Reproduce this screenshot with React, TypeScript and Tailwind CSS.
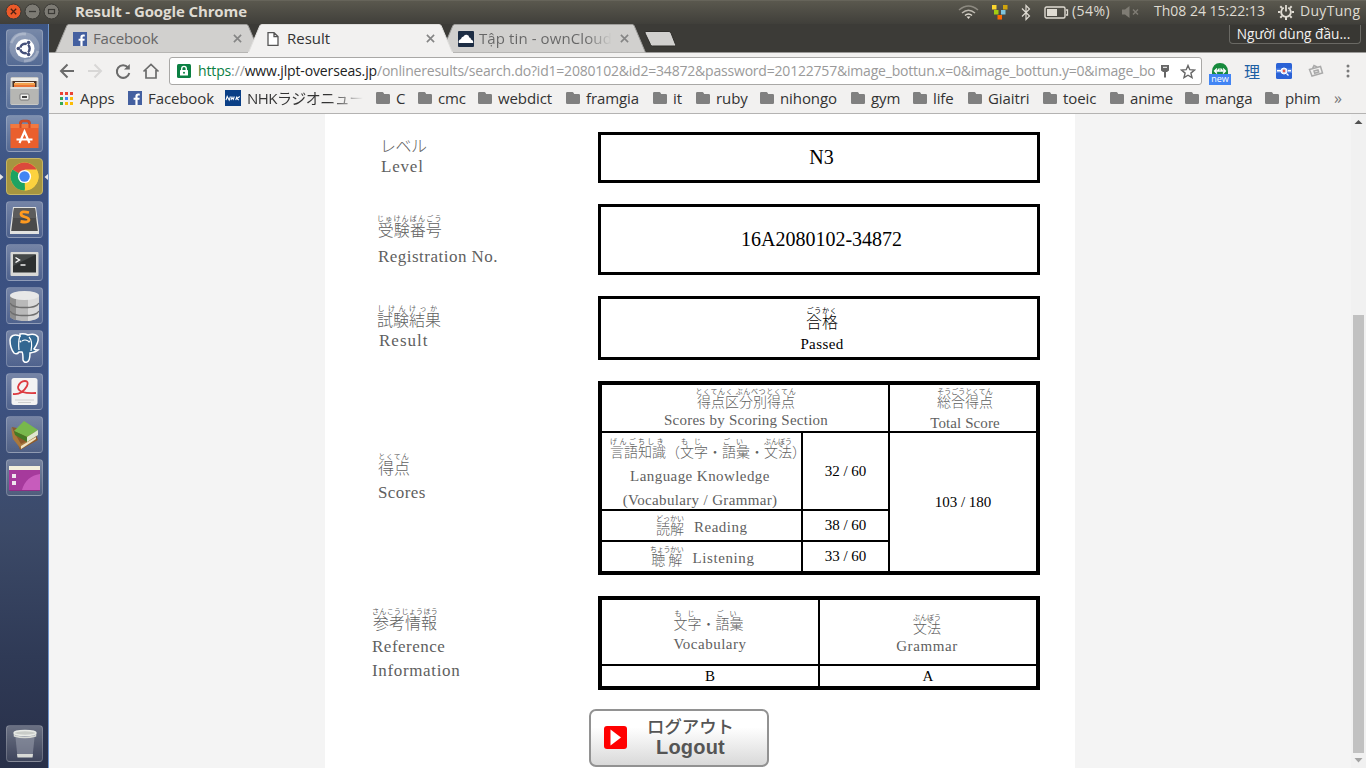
import React from "react";

/* ---------- shared ---------- */

const UI = "[font-family:'Open_Sans','Noto_Sans_CJK_JP',sans-serif]";
const SERIF = "[font-family:'Liberation_Serif','Noto_Sans_CJK_JP',serif]";
const JP = "[font-family:'Noto_Sans_CJK_JP',sans-serif]";

function FacebookIcon() {
  return (
    <svg width="14" height="14" viewBox="0 0 14 14" className="shrink-0">
      <rect width="14" height="14" fill="#4460a0" />
      <path d="M9.6 14V8.8h1.8l.3-2H9.6V5.6c0-.7.2-1 1.1-1h1.1V2.7c-.3 0-.9-.1-1.6-.1-1.8 0-2.8 1-2.8 2.8v1.4H5.6v2h1.8V14z" fill="#fff" />
    </svg>
  );
}

function FolderIcon() {
  return (
    <svg width="14" height="12" viewBox="0 0 14 12" className="shrink-0">
      <path d="M0 1.2Q0 0 1.2 0h5.3q.6 0 1 .7l.7 1.300h4.600Q14 2 14 3.200v7.600q0 1.200-1.200 1.200H1.200Q0 12 0 10.800z" fill="#808080" />
    </svg>
  );
}

/* ---------- top panel ---------- */

function TopPanel() {
  return (
    <header className="flex h-6 shrink-0 items-start border-t border-[#66645a] bg-gradient-to-b from-[#5a584e] to-[#403f3a] text-[#dfdbd2]">
      <svg width="62" height="22" viewBox="0 0 62 22" className="shrink-0">
        <circle cx="13.500" cy="10.500" r="7.500" fill="#ec5a29" stroke="#3a3935" />
        <path d="M10.800 7.800l5.400 5.400M16.200 7.800l-5.400 5.400" stroke="#4a2013" strokeWidth="1.300" />
        <circle cx="32.500" cy="10.500" r="7.500" fill="#7d7b74" stroke="#3a3935" />
        <path d="M29 10.500h7" stroke="#3a3935" strokeWidth="1.300" />
        <circle cx="51.500" cy="10.500" r="7.500" fill="#7d7b74" stroke="#3a3935" />
        <rect x="48.500" y="8.500" width="6" height="4" fill="none" stroke="#3a3935" strokeWidth="1.200" />
      </svg>
      <h1 className="ml-[13px] text-[15px] font-bold leading-[21px] tracking-[-0.1px]">Result - Google Chrome</h1>
      <div className="ml-auto flex h-[22px] w-[408px] items-center text-[14px] leading-[20px]">
        <svg width="21" height="16" viewBox="0 0 21 16" fill="none" strokeWidth="1.500" className="shrink-0">
          <path d="M1 6Q10.500-2 20 6" stroke="#8d8a81" />
          <path d="M4 9Q10.500 3.500 17 9" stroke="#bdb9b0" />
          <path d="M7 11.500Q10.500 8.500 14 11.500" stroke="#dfdbd2" />
          <path d="M8.500 12.500h4l-2 2.500z" fill="#dfdbd2" />
        </svg>
        <svg width="17" height="16" viewBox="0 0 17 16" className="ml-3 shrink-0">
          <rect x="1" y="1" width="4.500" height="4.500" fill="#fcd62e" />
          <rect x="12" y="1" width="4.500" height="4.500" fill="#d0a40c" />
          <rect x="3" y="6" width="4.500" height="4.500" fill="#a3cc12" />
          <rect x="10" y="6" width="4.500" height="4.500" fill="#7fc4dd" />
          <rect x="6.500" y="11" width="4.500" height="4.500" fill="#ff6a00" />
        </svg>
        <svg width="10" height="17" viewBox="0 0 10 17" fill="none" stroke="#dfdbd2" strokeWidth="1.200" className="ml-[13px] shrink-0">
          <path d="M1 4.500l7.500 7.500L5 15.500V1.500L8.500 5 1 12.500" />
        </svg>
        <svg width="25" height="13" viewBox="0 0 25 13" className="ml-[13px] shrink-0">
          <rect x="1" y="1" width="20" height="11" rx="1.500" fill="none" stroke="#dfdbd2" strokeWidth="1.400" />
          <rect x="3" y="3" width="10" height="7" fill="#dfdbd2" />
          <path d="M22 4h1.500v5H22" fill="none" stroke="#dfdbd2" strokeWidth="1.300" />
        </svg>
        <span className="mb-[2px] ml-[3px] w-[38px] tracking-[0.45px]">(54%)</span>
        <svg width="18" height="14" viewBox="0 0 18 14" className="ml-[12px] shrink-0">
          <path d="M0 4.500h3L7.500 1v12L3 9.500H0z" fill="#7f7c74" />
          <path d="M11 4.500l5 5M16 4.500l-5 5" stroke="#7f7c74" strokeWidth="1.500" />
        </svg>
        <span className="mb-[2px] ml-[14px] w-[111px] whitespace-nowrap">Th08 24 15:22:13</span>
        <svg width="16" height="16" viewBox="0 0 16 16" fill="none" stroke="#dfdbd2" className="ml-[13px] shrink-0">
          <path d="M5.800 3.800a4.800 4.800 0 1 0 4.400 0" strokeWidth="1.800" />
          <path d="M8 1v6.500" strokeWidth="1.800" />
          <path d="M0 8h2.500M13.500 8H16M2.300 13.700l1.800-1.800M13.700 13.700l-1.800-1.800M2.300 2.300l1.800 1.800M13.700 2.300l-1.800 1.800M8 13v3" strokeWidth="2" />
        </svg>
        <span className="mb-[2px] ml-[6px] tracking-[0.300px]">DuyTung</span>
      </div>
    </header>
  );
}

/* ---------- launcher ---------- */

function LauncherIcon({ active = false, children }: { active?: boolean; children: React.ReactNode }) {
  return (
    <div
      className={
        active
          ? "mb-[6px] flex h-[37px] w-[37px] shrink-0 items-center justify-center rounded-[4px] border border-[#c5b565] bg-[#a69540]"
          : "mb-[6px] flex h-[37px] w-[37px] shrink-0 items-center justify-center rounded-[4px] border border-white/20 bg-gradient-to-b from-white/30 to-white/10"
      }
    >
      <svg width="33" height="33" viewBox="0 0 33 33">
        {children}
      </svg>
    </div>
  );
}

function Launcher() {
  return (
    <aside className="relative flex w-[49px] shrink-0 flex-col border-r border-[#6f94cb] bg-[linear-gradient(180deg,#3d5583_0%,#48618f_12%,#3a5080_22%,#3d5282_50%,#3c4a68_68%,#2f3a56_85%,#293049_100%)] pt-[5px] pl-[6px]">
      <LauncherIcon>
        <circle cx="16.500" cy="16.500" r="15" fill="#fff" opacity=".22" />
        <path d="M3 12Q7 1 18 3M30 20Q27 31 16 30" stroke="#fff" strokeWidth="3" opacity=".25" fill="none" />
        <circle cx="17" cy="17.500" r="9.500" fill="#fff" />
        <circle cx="17" cy="17.500" r="4.600" fill="none" stroke="#45507a" strokeWidth="2.600" />
        <path d="M17 17.500L8 17.500M17 17.500l5-8.600M17 17.500l5 8.600" stroke="#fff" strokeWidth="1.300" />
        <circle cx="17" cy="17.500" r="3.200" fill="#fff" />
        <circle cx="10.300" cy="17.500" r="1.800" fill="#45507a" />
        <circle cx="20.600" cy="11.500" r="1.800" fill="#45507a" />
        <circle cx="20.600" cy="23.500" r="1.800" fill="#45507a" />
      </LauncherIcon>
      <LauncherIcon>
        <rect x="2.500" y="3" width="28" height="28" rx="1.500" fill="#c8c8c5" />
        <path d="M3 4h27v3H3z" fill="#e9e9e6" />
        <rect x="4.500" y="7" width="24" height="6" fill="#4a3327" />
        <path d="M6 9h21v2H6z" fill="#f2a14c" />
        <path d="M6 11h21v2H6z" fill="#ea7438" />
        <path d="M7 8h19v1H7z" fill="#f5e4cf" />
        <path d="M2.500 13h28v17h-28z" fill="#b6b6b3" />
        <path d="M2.500 13h28v2h-28z" fill="#dededb" />
        <rect x="12" y="20" width="9" height="6" rx="1" fill="#f2f2f0" stroke="#777" />
        <path d="M14 22h5v2h-5z" fill="#444" />
      </LauncherIcon>
      <LauncherIcon>
        <path d="M12.500 11V6.500Q12.500 4 15 4h4q2.500 0 2.500 2.500V11" fill="none" stroke="#b33d1c" strokeWidth="2.500" />
        <path d="M2.500 7h28v24h-28z" fill="#ea5f2d" />
        <path d="M2.500 7h28v4h-28z" fill="#f3793f" />
        <path d="M12.500 11V6.500Q12.500 4 15 4h4q2.500 0 2.500 2.500V11" fill="none" stroke="#cf4b25" strokeWidth="2" />
        <path d="M11.500 26l5-11.500L21.500 26M8.500 22.500h16" fill="none" stroke="#fff" strokeWidth="2.200" />
      </LauncherIcon>
      <LauncherIcon active>
        <circle cx="16.500" cy="16.500" r="14" fill="#fcd23f" />
        <path d="M16.500 16.500L4.400 9.500a14 14 0 0 1 24.200 0z" fill="#db4a3c" />
        <path d="M4.400 9.500l12.100 7 .5 13.900A14 14 0 0 1 4.400 9.500z" fill="#1da362" />
        <path d="M22 19.500L16.300 30.500a14 14 0 0 0 12.300-21H16.500z" fill="#fcd23f" />
        <circle cx="16.500" cy="16.500" r="6.600" fill="#fff" />
        <circle cx="16.500" cy="16.500" r="5.200" fill="#4285f4" />
      </LauncherIcon>
      <LauncherIcon>
        <path d="M5 4h23l3 23v4H2v-4z" fill="#e2e2e0" />
        <path d="M6 5h21l2.800 23H3.200z" fill="#4a4a4a" />
        <path d="M6 5h21l1.200 10H4.800z" fill="#5c5c5c" />
        <path d="M21 9.500q-8-2-8 1.500 0 2 4 3t4 3q-.5 3-8.500 1.500" fill="none" stroke="#ff9a1f" strokeWidth="2.800" />
      </LauncherIcon>
      <LauncherIcon>
        <rect x="2.500" y="6" width="28" height="24" rx="1" fill="#d9d9d6" />
        <rect x="5" y="8.500" width="23" height="18" fill="#2d3030" />
        <path d="M5 8.500h23L5 20z" fill="#454949" />
        <path d="M7.500 11.500l4 2.500-4 2.500" fill="none" stroke="#fff" strokeWidth="1.400" />
        <path d="M12.500 19h5" stroke="#fff" strokeWidth="1.400" />
      </LauncherIcon>
      <LauncherIcon>
        <path d="M2 7v20c0 2.500 6 5 14.500 5S31 29.500 31 27V7z" fill="#b9b9b9" />
        <path d="M2 7v20c0 2 3 3.500 6 4.300V8z" fill="#8d8d8d" />
        <path d="M20 10v22c6-.5 11-2.500 11-5V7z" fill="#dadada" />
        <ellipse cx="16.500" cy="6.500" rx="14.500" ry="4.500" fill="#e8e8e8" />
        <path d="M2 14c2 4 7 4.500 14.500 4.500S29 18 31 14M2 22c2 4 7 4.500 14.500 4.500S29 26 31 22" fill="none" stroke="#6f6f6f" strokeWidth="1.300" />
      </LauncherIcon>
      <LauncherIcon>
        <path d="M12 4Q3 1 2 8q0 8 4 13 3 2 5-1l3 0q1 1 1 8 1 3 4 2 3-1 3-9 6-1 8-3-3 0-4-1 5-7 4-12-3-4-10-2-4-2-8-1z" fill="#336791" stroke="#fff" strokeWidth="1.500" />
        <path d="M12 4q-2 5-1 14M21 5q4 4 2 14M14 9q3-2 6 0" fill="none" stroke="#fff" strokeWidth="1.200" />
        <circle cx="12.500" cy="9.500" r="1" fill="#fff" />
        <circle cx="21" cy="9.500" r="1" fill="#fff" />
      </LauncherIcon>
      <LauncherIcon>
        <rect x="3.500" y="3" width="26" height="27" rx="2.500" fill="#f3f3f3" />
        <path d="M5 19Q14 20 19 11q2-5-2-5-5 0-7 6 0 7 18 6" fill="none" stroke="#dd3b40" strokeWidth="1.800" />
        <path d="M7 25h19M10 27.500h13" stroke="#cfcfcf" strokeWidth="1" />
      </LauncherIcon>
      <LauncherIcon>
        <path d="M4 9l4 12 4 11 18-10-3-8z" fill="#8d5a2b" />
        <path d="M3 9l2 12 8 10 14-9v-3l-14 7z" fill="#a9783c" />
        <path d="M13 28l15-9v2l-15 10z" fill="#efe3c2" />
        <path d="M6 13L16 3l14 9-11 7z" fill="#78b84c" />
        <path d="M6 13l13 6v5L7 17z" fill="#447a24" />
        <path d="M19 19l11-7v5l-11 7z" fill="#dfe8cf" />
      </LauncherIcon>
      <LauncherIcon>
        <rect x="1" y="5" width="31" height="25" rx="1" fill="#8f2d83" />
        <path d="M1 9h31v20H1z" fill="#a63a9c" />
        <path d="M14 29q4-14 18-16v16z" fill="#d56bcb" opacity=".7" />
        <path d="M1 5h31v4H1z" fill="#f3f0dc" />
        <path d="M4 13h4v4H4zM4 20h4v4H4z" fill="#efe6ee" />
      </LauncherIcon>
      <div className="mt-auto">
        <LauncherIcon>
          <path d="M7 6h20l-2.500 24H9.500z" fill="#aab0bc" opacity=".45" />
          <path d="M9 27h16l-.5 3.500h-15z" fill="#d8dad6" />
          <ellipse cx="17" cy="6" rx="11" ry="2.500" fill="#c9ccc8" stroke="#e9ebe7" strokeWidth="1.500" />
          <path d="M6.500 7v2q10 3 21 0V7" fill="none" stroke="#d8dad6" strokeWidth="1.500" />
        </LauncherIcon>
      </div>
      <svg width="48" height="8" viewBox="0 0 48 8" className="absolute left-0 top-[149px]">
        <path d="M0 1l3.500 3L0 7zM48 1l-3.500 3L48 7z" fill="#e6e6e6" />
      </svg>
    </aside>
  );
}

/* ---------- tabs ---------- */

function Tab({ active = false, last = false, icon, title }: { active?: boolean; last?: boolean; icon: React.ReactNode; title: string }) {
  return (
    <div className={active ? "relative z-10 -ml-3 flex h-[29px] w-[205px] shrink-0 items-center" : "relative flex h-[29px] w-[205px] shrink-0 items-center first:ml-0 -ml-3"}>
      <svg width="205" height="29" viewBox="0 0 205 29" className="absolute inset-0">
        <path
          d="M0 28.500L1 27.500 11.700 2Q12.400.5 13.500.5H191.500Q192.600.5 193.300 2L204 27.500l1 1"
          fill={active ? "#f2f1f0" : "#d1d0ce"}
          stroke={active ? "#e0dfdd" : "#9f9e9c"}
        />
        {active && <path d="M0 28.500h205" stroke="#f2f1f0" />}
      </svg>
      <div className="relative ml-[17px] flex w-4 shrink-0 justify-center">{icon}</div>
      <span
        className={
          active
            ? "relative ml-[6px] mb-px w-[134px] text-[15px] leading-5 text-[#333]"
            : last
              ? "relative ml-[5px] mb-px w-[133px] overflow-hidden whitespace-nowrap bg-gradient-to-r from-[#666] from-80% to-[#d1d0ce] to-100% bg-clip-text text-[15px] leading-[22px] tracking-[0.100px] text-transparent"
              : "relative ml-[5px] mb-px w-[135px] text-[15px] leading-5 tracking-[-0.2px] text-[#666]"
        }
      >
        {title}
      </span>
      <svg width="9" height="9" viewBox="0 0 10 10" className={last ? "relative ml-[8px]" : "relative ml-[5px]"}>
        <path d="M1 1l8 8M9 1L1 9" stroke="#858585" strokeWidth="1.800" />
      </svg>
    </div>
  );
}

function TabStrip() {
  return (
    <div className="flex h-[29px] shrink-0 items-start border-b border-[#9b9a98] bg-[#3c3b37] pl-[6px] pr-[5px]">
      <Tab icon={<FacebookIcon />} title="Facebook" />
      <Tab
        active
        icon={
          <svg width="12" height="14" viewBox="0 0 12 14">
            <path d="M1 .7h6L11 4.500v8.800H1zM7 .7v4h4" fill="#fff" stroke="#555" strokeWidth="1.300" />
          </svg>
        }
        title="Result"
      />
      <Tab
        last
        icon={
          <svg width="16" height="16" viewBox="0 0 16 16">
            <rect width="16" height="16" rx="1" fill="#1d2d44" />
            <path d="M.8 12Q0 9 3 8 3.500 5.500 5.500 5.500 6.500 3.500 8.500 3.800 11 4 11.300 6.500 13 6.500 13 8.500 15.500 9 15.200 12z" fill="#fff" />
          </svg>
        }
        title="Tập tin - ownCloud"
      />
      <svg width="33" height="16" viewBox="0 0 33 16" className="mt-[7px] -ml-[2px] shrink-0">
        <path d="M2 .5h23q1.500 0 2 1.500l4.500 11.500q.5 1.500-1 1.500H8.500q-1.500 0-2-1.500L1 2Q.5.500 2 .5z" fill="#d1d0ce" stroke="#2f2e2b" />
      </svg>
      <div className="ml-auto mt-px flex h-[19px] w-[132px] items-center justify-center whitespace-nowrap rounded-b-[4px] border border-t-0 border-[#6a6964] bg-[#383733] pr-[3px] text-[13.700px] leading-[18px] text-[#f2f1f0]">
        Người dùng đầu...
      </div>
    </div>
  );
}

/* ---------- toolbar ---------- */

function Toolbar() {
  return (
    <div className="flex h-[36px] shrink-0 items-center bg-[#f2f1f0]">
      <svg width="109" height="18" viewBox="0 0 109 18" fill="none" stroke="#6b6b6b" strokeWidth="2" className="ml-[10px] shrink-0">
        <path d="M15 9H3M8.500 2.500L2 9l6.500 6.500" />
        <path d="M29 9h12M35.500 2.500L42 9l-6.500 6.500" stroke="#d8d7d6" />
        <path d="M69 5.500A6.300 6.300 0 1 0 70.300 11" />
        <path d="M70.800 2v5.500H65z" fill="#6b6b6b" stroke="none" />
        <path d="M84.500 9.500L92 2.500l7.500 7M87 8v8h10V8" strokeWidth="1.700" />
      </svg>
      <div className="ml-px flex h-[28px] w-[1033px] shrink-0 items-center rounded-[3px] border border-[#a9a8a6] bg-white">
        <svg width="14" height="14" viewBox="0 0 14 14" className="ml-[7px] shrink-0">
          <rect width="14" height="14" rx="1.500" fill="#0b8043" />
          <rect x="3" y="6" width="8" height="5.500" rx=".5" fill="#fff" />
          <path d="M4.700 6V4.700a2.300 2.300 0 0 1 4.600 0V6" fill="none" stroke="#fff" strokeWidth="1.400" />
          <circle cx="7" cy="8.700" r="1" fill="#0b8043" />
        </svg>
        <div className="ml-[7px] flex w-[957px] overflow-hidden whitespace-nowrap text-[14px] leading-[22px] text-[#9a9a9a]">
          <span className="tracking-[-0.140px]">
            <span className="text-[#0b8043]">https</span>://<span className="text-[#222]">www.jlpt-overseas.jp</span>
          </span>
          <span className="tracking-[-0.200px]">
            /onlineresults/search.do?id1=2080102&amp;id2=34872&amp;password=20122757&amp;image_bottun.x=0&amp;image_bottun.y=0&amp;image_bo
          </span>
        </div>
        <svg width="10" height="13" viewBox="0 0 10 13" className="ml-[5px] shrink-0">
          <path d="M1 0h8v5.500L7 7H3L1 5.500z" fill="#666" />
          <path d="M3 1.800h4v1H3z" fill="#fff" />
          <path d="M4 7h2v5.500H4z" fill="#666" />
        </svg>
        <svg width="16" height="15" viewBox="0 0 16 15" className="ml-[10px] shrink-0">
          <path d="M8 1.500l1.800 4.200 4.700.4-3.600 3 1.100 4.500L8 11.200l-4 2.400 1.100-4.500-3.600-3 4.700-.4z" fill="none" stroke="#666" strokeWidth="1.400" />
        </svg>
      </div>
      <div className="mt-[5px] ml-[6px] flex h-[22px] w-[24px] shrink-0 flex-col items-center">
        <svg width="18" height="11" viewBox="0 0 18 11" className="shrink-0">
          <path d="M1 11V8.500Q1.500 0 9 0t8 8.500V11z" fill="#168a3c" />
          <path d="M3.500 8h11M6 5.500L3.500 8 6 10.500M8.500 5.500L6.500 8M9.500 5.500l2 2.500M12 5.500L14.500 8 12 10.500" stroke="#fff" strokeWidth="1.300" fill="none" />
        </svg>
        <div className="h-[11px] w-[22px] bg-[#4285f4] text-center text-[9px] leading-[10px] text-white">new</div>
      </div>
      <span className={`${JP} ml-[12px] w-4 text-[16px] leading-5 text-[#1d5fa3]`}>理</span>
      <svg width="16" height="16" viewBox="0 0 16 16" className="ml-[16px] shrink-0">
        <rect width="16" height="16" rx="1.500" fill="#2b62d6" />
        <path d="M0 5.500h16v4.500H0z" fill="#4f81e6" />
        <path d="M1 7h4v1.500H1zM12 7h3v1.500h-3z" fill="#fff" />
        <circle cx="8" cy="8" r="3" fill="#dce7fb" stroke="#fff" />
        <circle cx="8" cy="8" r="1.400" fill="#e2574c" />
        <path d="M10.500 10.500l2 2" stroke="#fff" strokeWidth="1.300" />
      </svg>
      <svg width="16" height="16" viewBox="0 0 16 16" fill="none" stroke="#aaa" strokeWidth="1.500" className="ml-[16px] shrink-0">
        <path d="M1.500 6.500l11-3 2 6.500-10.500 3zM4.500 5.500l1.500-3 3 1.500M6 8l4-1 .7 2-4 1.200z" />
      </svg>
      <svg width="4" height="14" viewBox="0 0 4 14" className="ml-[22px] shrink-0">
        <circle cx="2" cy="2" r="1.500" fill="#7a7a7a" />
        <circle cx="2" cy="7" r="1.500" fill="#7a7a7a" />
        <circle cx="2" cy="12" r="1.500" fill="#7a7a7a" />
      </svg>
    </div>
  );
}

/* ---------- bookmarks ---------- */

const folders: { name: string; width: string }[] = [
  { name: "C", width: "w-[42px]" },
  { name: "cmc", width: "w-[60px]" },
  { name: "webdict", width: "w-[88px]" },
  { name: "framgia", width: "w-[87px]" },
  { name: "it", width: "w-[43px]" },
  { name: "ruby", width: "w-[64px]" },
  { name: "nihongo", width: "w-[91px]" },
  { name: "gym", width: "w-[62px]" },
  { name: "life", width: "w-[55px]" },
  { name: "Giaitri", width: "w-[75px]" },
  { name: "toeic", width: "w-[67px]" },
  { name: "anime", width: "w-[75px]" },
  { name: "manga", width: "w-[80px]" },
  { name: "phim", width: "w-[69px]" },
];

function BookmarksBar() {
  return (
    <div className="flex h-[25px] shrink-0 items-center border-b border-[#b4b3b2] bg-[#f2f1f0] pb-[6px] pl-[10px] text-[15px] leading-[18px] tracking-[-0.100px] text-[#333]">
      <div className="flex w-[69px] shrink-0 items-center gap-[7px]">
        <svg width="14" height="14" viewBox="0 0 14 14">
          <path d="M1 1h3v3H1zM6 1h3v3H6zM11 1h3v3h-3z" fill="#ea4335" />
          <path d="M1 6h3v3H1z" fill="#34a853" />
          <path d="M6 6h3v3H6z" fill="#4285f4" />
          <path d="M11 6h3v3h-3zM6 11h3v3H6zM11 11h3v3h-3z" fill="#fbbc05" />
          <path d="M1 11h3v3H1z" fill="#34a853" />
        </svg>
        Apps
      </div>
      <div className="flex w-[97px] shrink-0 items-center gap-[6px]">
        <FacebookIcon />
        Facebook
      </div>
      <div className="flex w-[151px] shrink-0 items-center gap-[6px]">
        <svg width="16" height="16" viewBox="0 0 16 16" className="shrink-0">
          <rect width="16" height="16" fill="#0a3f86" />
          <path d="M1 10.200l1.200-3.700 2 3.700L5.400 6.500M6 10.200l1.200-3.700M9.300 6.500l-1.200 3.700M6.800 8.400h2M10.700 10.200l1.200-3.700M14.800 6.500l-3 2 2 1.700" stroke="#fff" strokeWidth="1.100" fill="none" />
        </svg>
        <span className="w-[116px] overflow-hidden whitespace-nowrap bg-gradient-to-r from-[#333] from-70% to-[#f2f1f0] bg-clip-text font-normal leading-[20px] tracking-[-0.500px] text-transparent">
          NHKラジオニュース
        </span>
      </div>
      {folders.map((f) => (
        <div key={f.name} className={`flex shrink-0 items-center gap-[6px] ${f.width}`}>
          <FolderIcon />
          {f.name}
        </div>
      ))}
      <span className="text-[16px] text-[#777]">»</span>
    </div>
  );
}

/* ---------- result page ---------- */

interface RubyProps {
  ruby?: string;
  base: string;
  tracking?: string;
  small?: boolean;
}

function Kanji({ ruby = "", base, tracking = "tracking-[1px]", small = false }: RubyProps) {
  return (
    <span className={`flex flex-col items-center whitespace-nowrap ${JP}`}>
      <span className={`h-[7px] text-[7px] leading-[8px] ${tracking}`}>{ruby}</span>
      <span className={small ? "h-[14px] text-[14px] font-light leading-[14px]" : "h-[16px] text-[16px] font-light leading-[16px]"}>{base}</span>
    </span>
  );
}

function Row({ label, children, className }: { label: React.ReactNode; children: React.ReactNode; className: string }) {
  return (
    <section className={`flex w-full shrink-0 ${className}`}>
      <div className={`flex w-[273px] shrink-0 flex-col items-start pl-[53px] text-[17px] text-[#5f5f5f] ${SERIF}`}>{label}</div>
      {children}
    </section>
  );
}

const cell = "flex flex-col items-center bg-white";
const score = "flex items-center justify-center bg-white text-[15px] text-black";

function ResultPage() {
  return (
    <main className={`flex w-[750px] flex-col gap-[21px] overflow-hidden bg-white pt-[18px] ${SERIF}`}>
      <Row
        className="h-[51px]"
        label={
          <>
            <span className={`mt-[5px] ml-[2px] text-[16px] font-light leading-[16px] tracking-[-0.500px] ${JP}`}>レベル</span>
            <span className="mt-[4px] ml-[3px] leading-[20px] tracking-[0.800px]">Level</span>
          </>
        }
      >
        <div className="flex w-[442px] items-center justify-center border-[3px] border-black pb-[2px] pl-[5px] text-[20px] text-black">N3</div>
      </Row>

      <Row
        className="h-[71px]"
        label={
          <>
            <div className="mt-[10px] -ml-px">
              <Kanji ruby="じゅけんばんごう" base="受験番号" tracking="tracking-[1.200px]" />
            </div>
            <span className="mt-[8px] leading-[24px] tracking-[0.480px]">Registration No.</span>
          </>
        }
      >
        <div className="flex w-[442px] items-center justify-center border-[3px] border-black pb-[2px] pl-[5px] text-[20px] text-black">16A2080102-34872</div>
      </Row>

      <Row
        className="h-[64px]"
        label={
          <>
            <div className="mt-[8px] -ml-px">
              <Kanji ruby="しけんけっか" base="試験結果" tracking="tracking-[3.500px]" />
            </div>
            <span className="mt-[4px] ml-px leading-[20px] tracking-[1.000px]">Result</span>
          </>
        }
      >
        <div className="flex w-[442px] flex-col items-center border-[3px] border-black pl-[6px] pt-[7px] text-black">
          <Kanji ruby="ごうかく" base="合格" tracking="tracking-[0.800px]" />
          <span className="mt-[5px] text-[15px] leading-[20px] tracking-[0.400px]">Passed</span>
        </div>
      </Row>

      <Row
        className="h-[194px]"
        label={
          <>
            <div className="mt-[71px]">
              <Kanji ruby="とくてん" base="得点" />
            </div>
            <span className="mt-[8px] leading-[20px] tracking-[0.400px]">Scores</span>
          </>
        }
      >
        <div className="grid w-[442px] grid-cols-[199px_85px_146px] grid-rows-[46px_76px_29px_29px] gap-[2px] border-4 border-black bg-black text-[15px] text-[#5f5f5f]">
          <div className={`col-span-2 ${cell} pt-[2px] pl-[2px]`}>
            <Kanji small ruby="とくてんく ぶんべつとくてん" base="得点区分別得点" tracking="tracking-[0.650px]" />
            <span className="mt-[2px] leading-[20px] tracking-[0.250px]">Scores by Scoring Section</span>
          </div>
          <div className={`${cell} pt-[2px] pl-[4px]`}>
            <Kanji small ruby="そうごうとくてん" base="総合得点" tracking="tracking-0" />
            <span className="mt-[5px] leading-[20px] tracking-[0.100px]">Total Score</span>
          </div>
          <div className={cell}>
            <div className="mt-[4px] ml-[8px] flex self-start">
              <Kanji small ruby="げんごちしき" base="言語知識" tracking="tracking-[2.300px]" />
              <Kanji small base="（" />
              <Kanji small ruby="もじ" base="文字" tracking="tracking-[6px]" />
              <Kanji small base="・" />
              <Kanji small ruby="ごい" base="語彙" tracking="tracking-[6px]" />
              <Kanji small base="・" />
              <Kanji small ruby="ぶんぽう" base="文法" tracking="tracking-0" />
              <div className="flex w-[7px]">
                <Kanji small base="）" />
              </div>
            </div>
            <span className="mt-[6px] mr-[3px] leading-[24px] tracking-[0.430px]">Language Knowledge</span>
            <span className="mr-[3px] leading-[24px] tracking-[0.340px]">(Vocabulary / Grammar)</span>
          </div>
          <div className={score}>32 / 60</div>
          <div className={`row-span-3 ${score}`}>103 / 180</div>
          <div className="flex items-start bg-white pl-[54px] pt-[3px]">
            <Kanji small ruby="どっかい" base="読解" tracking="tracking-0" />
            <span className="ml-[10px] mt-[3px] leading-[20px] tracking-[0.500px]">Reading</span>
          </div>
          <div className={score}>38 / 60</div>
          <div className="flex items-start bg-white pl-[48px] pt-[3px]">
            <Kanji small ruby="ちょうかい" base="聴 解" tracking="tracking-[-0.300px]" />
            <span className="ml-[9px] mt-[3px] leading-[20px] tracking-[0.600px]">Listening</span>
          </div>
          <div className={score}>33 / 60</div>
        </div>
      </Row>

      <Row
        className="h-[94px]"
        label={
          <div className="-ml-[6px] flex flex-col items-start">
            <div className="mt-[11px]">
              <Kanji ruby="さんこうじょうほう" base="参考情報" tracking="tracking-[0.350px]" />
            </div>
            <span className="mt-[5px] leading-[24px] tracking-[0.500px]">Reference</span>
            <span className="leading-[24px] tracking-[0.650px]">Information</span>
          </div>
        }
      >
        <div className="grid w-[442px] grid-cols-2 grid-rows-[64px_20px] gap-[2px] border-4 border-black bg-black text-[15px] text-[#5f5f5f]">
          <div className={`${cell} pt-[9px]`}>
            <div className="-ml-[3px] flex">
              <Kanji small ruby="もじ" base="文字" tracking="tracking-[6px]" />
              <Kanji small base="・" />
              <Kanji small ruby="ごい" base="語彙" tracking="tracking-[6px]" />
            </div>
            <span className="mt-[4px] leading-[20px] tracking-[0.500px]">Vocabulary</span>
          </div>
          <div className={`${cell} pt-[13px] pr-[2px]`}>
            <Kanji small ruby="ぶんぽう" base="文法" tracking="tracking-0" />
            <span className="mt-[2px] leading-[20px] tracking-[0.600px]">Grammar</span>
          </div>
          <div className={score}>B</div>
          <div className={score}>A</div>
        </div>
      </Row>

      <button className="-mt-[2px] ml-[264px] flex h-[58px] w-[180px] shrink-0 items-center rounded-[7px] border-2 border-[#929292] bg-gradient-to-b from-white from-30% to-[#d9d9d9] pb-px text-[#555]">
        <svg width="23" height="23" viewBox="0 0 23 23" className="ml-[13px] shrink-0">
          <rect width="23" height="23" rx="3" fill="#f00" />
          <path d="M6.500 3.500L17 11.500 6.500 19.500z" fill="#fff" />
        </svg>
        <span className="ml-[20px] flex flex-col items-center">
          <span className={`-mt-[3px] text-[17.400px] font-medium leading-[20px] ${JP}`}>ログアウト</span>
          <span className="mt-px text-[20px] font-bold leading-[20px] tracking-[0.200px] [font-family:'Liberation_Sans',sans-serif]">Logout</span>
        </span>
      </button>
    </main>
  );
}

function Scrollbar() {
  return (
    <div className="flex w-[15px] shrink-0 flex-col items-center bg-[#f1f1f1]">
      <svg width="9" height="5" viewBox="0 0 9 5" className="mt-[6px]">
        <path d="M4.500 0L8.500 4H.5z" fill="#505050" />
      </svg>
      <div className="mt-[190px] h-[438px] w-[11px] bg-[#c1c1c1]" />
      <svg width="9" height="5" viewBox="0 0 9 5" className="mt-[5px]">
        <path d="M.5 0h8L4.500 4.500z" fill="#a3a3a3" />
      </svg>
    </div>
  );
}

export default function App() {
  return (
    <div className={`flex h-[768px] w-[1366px] flex-col overflow-hidden bg-[#f4f4f4] ${UI}`}>
      <TopPanel />
      <div className="flex h-[744px]">
        <Launcher />
        <div className="flex w-[1317px] flex-col">
          <TabStrip />
          <Toolbar />
          <BookmarksBar />
          <div className="flex min-h-0 flex-1">
            <div className="flex min-h-0 flex-1 pl-[276px]">
              <ResultPage />
            </div>
            <Scrollbar />
          </div>
        </div>
      </div>
    </div>
  );
}
